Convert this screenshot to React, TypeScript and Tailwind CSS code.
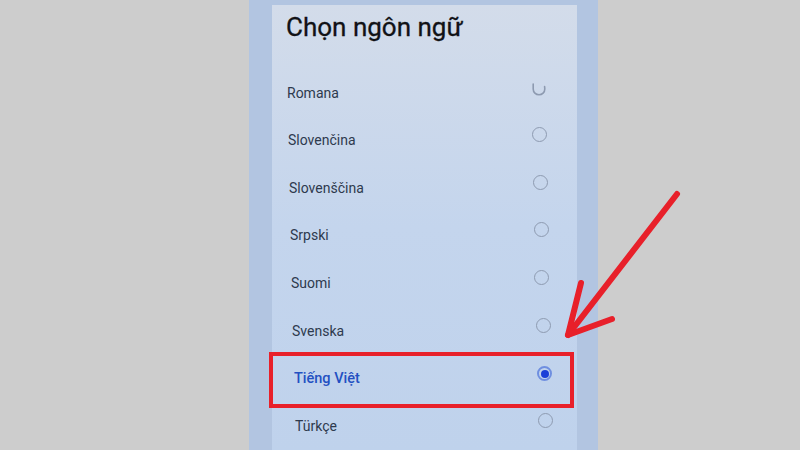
import React from "react";

type Row = { name: string; pl: string; pr: string; selected?: boolean; partial?: boolean };

const rows: Row[] = [
  { name: "Romana", pl: "pl-[15px]", pr: "pr-[30px]", partial: true },
  { name: "Slovenčina", pl: "pl-[16px]", pr: "pr-[30px]" },
  { name: "Slovenščina", pl: "pl-[17px]", pr: "pr-[29px]" },
  { name: "Srpski", pl: "pl-[18px]", pr: "pr-[28px]" },
  { name: "Suomi", pl: "pl-[19px]", pr: "pr-[28px]" },
  { name: "Svenska", pl: "pl-[20px]", pr: "pr-[26px]" },
  { name: "Tiếng Việt", pl: "pl-[22px]", pr: "pr-[25px]", selected: true },
  { name: "Türkçe", pl: "pl-[23px]", pr: "pr-[24px]" },
];

function Radio({ selected, partial }: { selected?: boolean; partial?: boolean }) {
  if (partial) {
    return (
      <svg width="16" height="16" viewBox="0 0 16 16" className="mb-[7px]">
        <path d="M2.2 2 L2.2 7 A5.8 5.8 0 0 0 13.8 7 L13.6 4.5" fill="none" stroke="#8d9ab0" strokeWidth="1.6" strokeLinecap="round" />
      </svg>
    );
  }
  if (selected) {
    return (
      <div className="mb-[10px] w-[15px] h-[15px] rounded-full border-[2px] border-[#6f8fe0] flex items-center justify-center">
        <div className="w-[8px] h-[8px] rounded-full bg-[#1a3fd8]" />
      </div>
    );
  }
  return <div className="mb-[12px] w-[15px] h-[15px] rounded-full border-[1.5px] border-[#8e9bb1]" />;
}

export default function App() {
  return (
    <div
      className="relative w-[800px] h-[450px] overflow-hidden bg-[#cdcdcd] flex"
      style={{ fontFamily: "Roboto, 'Noto Sans', sans-serif" }}
    >
      <div className="ml-[249px] w-[349px] h-full bg-[#b2c5e1] pt-[5px] flex">
        <div className="ml-[23px] w-[305px] h-full bg-gradient-to-b from-[#d3dcea] via-[#c4d5ed] to-[#bfd2ec] flex flex-col">
          <div className="h-[65px] pl-[14px] pt-[6px] flex items-start">
            <span className="text-[26px] leading-[32px] text-[#111216] [-webkit-text-stroke:0.3px_#111216]">
              Chọn ngôn ngữ
            </span>
          </div>
          {rows.map((r) => (
            <div
              key={r.name}
              className={`h-[48px] flex items-center justify-between ${r.pl} ${r.pr}`}
            >
              <span
                className={
                  r.selected
                    ? "text-[14.5px] font-medium text-[#2350c2]"
                    : "text-[14px] text-[#2e3a4e]"
                }
              >
                {r.name}
              </span>
              <Radio selected={r.selected} partial={r.partial} />
            </div>
          ))}
        </div>
      </div>

      {/* highlight annotation */}
      <div className="absolute left-[269px] top-[352px] w-[305px] h-[56px] border-[4px] border-[#e8202a]" />

      {/* arrow annotation */}
      <svg className="absolute left-0 top-0" width="800" height="450" viewBox="0 0 800 450">
        <g stroke="#e8202a" strokeWidth="6" strokeLinecap="round" strokeLinejoin="round" fill="none">
          <path d="M677 194 L568 335" />
          <path d="M581 283 L568 335 L612 319" />
        </g>
      </svg>
    </div>
  );
}
